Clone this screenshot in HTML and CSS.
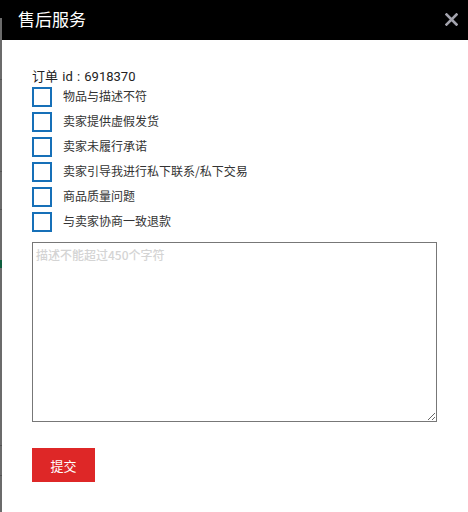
FILE: index.html
```html
<!DOCTYPE html>
<html lang="zh-CN">
<head>
<meta charset="utf-8">
<link rel="stylesheet" href="styles.css">
</head>
<body>
<div class="page-edge">
  <span class="edge-mark m1"></span>
  <span class="edge-mark m2"></span>
  <span class="edge-mark m3"></span>
  <span class="edge-green"></span>
  <span class="edge-mark m4"></span>
  <span class="edge-mark m5"></span>
</div>
<div class="modal">
  <div class="modal-header">
    <span class="modal-title">售后服务</span>
    <span class="modal-close">
      <svg width="13" height="13" viewBox="0 0 13 13"><path d="M1.5 1.5 L11.5 11.5 M11.5 1.5 L1.5 11.5" stroke="#a3a3ad" stroke-width="2.6" stroke-linecap="square"/></svg>
    </span>
  </div>
  <div class="modal-body">
    <div class="order-id">订单 id : 6918370</div>
    <ul class="reasons">
      <li class="reason"><span class="box"></span><span class="reason-text">物品与描述不符</span></li>
      <li class="reason"><span class="box"></span><span class="reason-text">卖家提供虚假发货</span></li>
      <li class="reason"><span class="box"></span><span class="reason-text">卖家未履行承诺</span></li>
      <li class="reason"><span class="box"></span><span class="reason-text">卖家引导我进行私下联系/私下交易</span></li>
      <li class="reason"><span class="box"></span><span class="reason-text">商品质量问题</span></li>
      <li class="reason"><span class="box"></span><span class="reason-text">与卖家协商一致退款</span></li>
    </ul>
    <textarea class="desc" placeholder="描述不能超过450个字符"></textarea>
    <button class="submit">提交</button>
  </div>
</div>
</body>
</html>
```

FILE: styles.css
```css
html, body {
  margin: 0;
  padding: 0;
  background: #fff;
}
body {
  font-family: "Noto Sans CJK SC", "Noto Sans", sans-serif;
  width: 468px;
  height: 512px;
  overflow: hidden;
  position: relative;
}
.page-edge {
  position: absolute;
  left: 0;
  top: 18px;
  width: 2px;
  height: 494px;
  background: #6b6b6b;
  z-index: 2;
}
.edge-mark {
  position: absolute;
  left: 0;
  width: 2px;
  height: 1px;
  background: #555;
}
.m1 { top: 61px; }
.m2 { top: 153px; }
.m3 { top: 191px; }
.m4 { top: 427px; }
.m5 { top: 457px; }
.edge-green {
  position: absolute;
  left: 0;
  top: 242px;
  width: 2px;
  height: 8px;
  background: #0e5e3e;
}
.modal-header {
  height: 40px;
  background: #000;
  display: flex;
  align-items: center;
  justify-content: space-between;
  padding: 0 10px 0 18px;
}
.modal-title {
  color: #fff;
  font-size: 17px;
  line-height: 20px;
  margin-top: -3px;
}
.modal-close {
  display: flex;
  width: 13px;
  height: 13px;
  margin-top: -2px;
}
.modal-body {
  padding: 28px 0 0 32px;
}
.order-id {
  font-size: 13px;
  line-height: 18px;
  color: #222;
  font-family: "Roboto", "Noto Sans CJK SC", sans-serif;
  word-spacing: 1px;
}
.reasons {
  list-style: none;
  margin: 1px 0 0;
  padding: 0;
  display: flex;
  flex-direction: column;
  gap: 5px;
}
.reason {
  display: flex;
  align-items: center;
  height: 20px;
}
.box {
  width: 16px;
  height: 16px;
  border: 2px solid #1670b8;
  flex: none;
}
.reason-text {
  margin-left: 11px;
  font-size: 12px;
  color: #333;
  line-height: 16px;
  margin-top: -2px;
}
.desc {
  display: block;
  margin-top: 10px;
  width: 405px;
  height: 180px;
  box-sizing: border-box;
  border: 1px solid #777;
  padding: 3px 3px;
  font-family: "Noto Sans CJK SC", sans-serif;
  font-size: 12px;
  resize: both;
  outline: none;
}
.desc::placeholder {
  color: #d4d4d4;
  font-weight: 500;
}
.submit {
  display: block;
  margin-top: 26px;
  width: 63px;
  height: 34px;
  border: none;
  background: #de2727;
  color: #fff;
  font-family: "Noto Sans CJK SC", sans-serif;
  font-size: 13px;
  padding: 0;
}
```
